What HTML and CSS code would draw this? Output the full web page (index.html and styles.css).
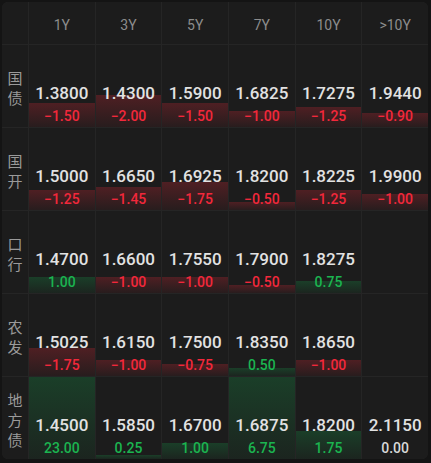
FILE: index.html
```html
<!DOCTYPE html>
<html lang="zh">
<head>
    <meta charset="UTF-8">
    <meta name="viewport" content="width=device-width, initial-scale=1.0">
    <title>利率</title>
    <link rel="stylesheet" href="styles.css">
</head>
<body>

<div class="board" id="board">
    <div class="corner"></div>
    <div class="head">1Y</div>
    <div class="head">3Y</div>
    <div class="head">5Y</div>
    <div class="head">7Y</div>
    <div class="head">10Y</div>
    <div class="head">&gt;10Y</div>
</div>

<script>
    const rows = [
        { name: "国债", data: [[1.38, -1.5], [1.43, -2], [1.59, -1.5], [1.6825, -1], [1.7275, -1.25], [1.944, -0.9]] },
        { name: "国开", data: [[1.5, -1.25], [1.665, -1.45], [1.6925, -1.75], [1.82, -0.5], [1.8225, -1.25], [1.99, -1]] },
        { name: "口行", data: [[1.47, 1], [1.66, -1], [1.755, -1], [1.79, -0.5], [1.8275, 0.75], null] },
        { name: "农发", data: [[1.5025, -1.75], [1.615, -1], [1.75, -0.75], [1.835, 0.5], [1.865, -1], null] },
        { name: "地方债", data: [[1.45, 23], [1.585, 0.25], [1.67, 1], [1.6875, 6.75], [1.82, 1.75], [2.115, 0]] }
    ];
    const board = document.getElementById("board");

    function fmtChange(v) {
        if (v < 0) return "\u2212" + Math.abs(v).toFixed(2);
        return v.toFixed(2);
    }

    rows.forEach(row => {
        const label = document.createElement("div");
        label.className = "label";
        label.innerHTML = row.name.split("").map(c => `<span>${c}</span>`).join("");
        board.appendChild(label);

        row.data.forEach(item => {
            const cell = document.createElement("div");
            cell.className = "cell";
            if (item) {
                const [rate, change] = item;
                const kind = change > 0 ? "up" : change < 0 ? "down" : "flat";
                if (change !== 0) {
                    // bar height: 16px per 1.00, capped at full cell
                    const h = Math.abs(change) * 16;
                    const bar = document.createElement("div");
                    bar.className = "bar " + kind;
                    bar.style.height = h < 82 ? h + "px" : "100%";
                    cell.appendChild(bar);
                }
                cell.innerHTML += `<div class="rate">${rate.toFixed(4)}</div><div class="change ${kind}">${fmtChange(change)}</div>`;
            }
            board.appendChild(cell);
        });
    });
</script>

</body>
</html>
```

FILE: styles.css
```css
body {
    margin: 0;
    background-color: #141414;
    font-family: Roboto, "Noto Sans CJK SC", sans-serif;
}
.board {
    display: grid;
    grid-template-columns: 26px repeat(6, 1fr);
    grid-template-rows: 42px repeat(5, 82px);
    gap: 1px;
    width: 426px;
    margin: 2px;
    background-color: #252525;
    border-radius: 6px;
    overflow: hidden;
}
.corner, .head, .label, .cell {
    background-color: #1c1c1c;
}
.head {
    display: flex;
    justify-content: center;
    align-items: center;
    padding-top: 4px;
    font-size: 14px;
    color: #8c8c8c;
}
.label {
    display: flex;
    flex-direction: column;
    justify-content: center;
    align-items: center;
    padding-top: 3px;
    font-family: "Noto Sans CJK SC", sans-serif;
    font-size: 15px;
    line-height: 20px;
    color: #9a9a9a;
}
.cell {
    position: relative;
    display: flex;
    flex-direction: column;
    justify-content: flex-end;
    align-items: center;
    padding-bottom: 2px;
}
.bar {
    position: absolute;
    left: 0;
    right: 0;
    bottom: 0;
}
.bar.down {
    background: linear-gradient(to bottom, rgba(225, 40, 55, 0.26), rgba(225, 40, 55, 0.06));
}
.bar.up {
    background: linear-gradient(to bottom, rgba(20, 200, 90, 0.2), rgba(20, 200, 90, 0.05));
}
.rate {
    position: relative;
    font-size: 17px;
    font-weight: 500;
    line-height: 20px;
    margin-bottom: 4px;
    color: #e2e2e2;
}
.change {
    position: relative;
    font-size: 14px;
    font-weight: 500;
    line-height: 18px;
}
.change.down {
    color: #f2283b;
}
.change.up {
    color: #1bb450;
}
.change.flat {
    color: #d8d8d8;
}
```
